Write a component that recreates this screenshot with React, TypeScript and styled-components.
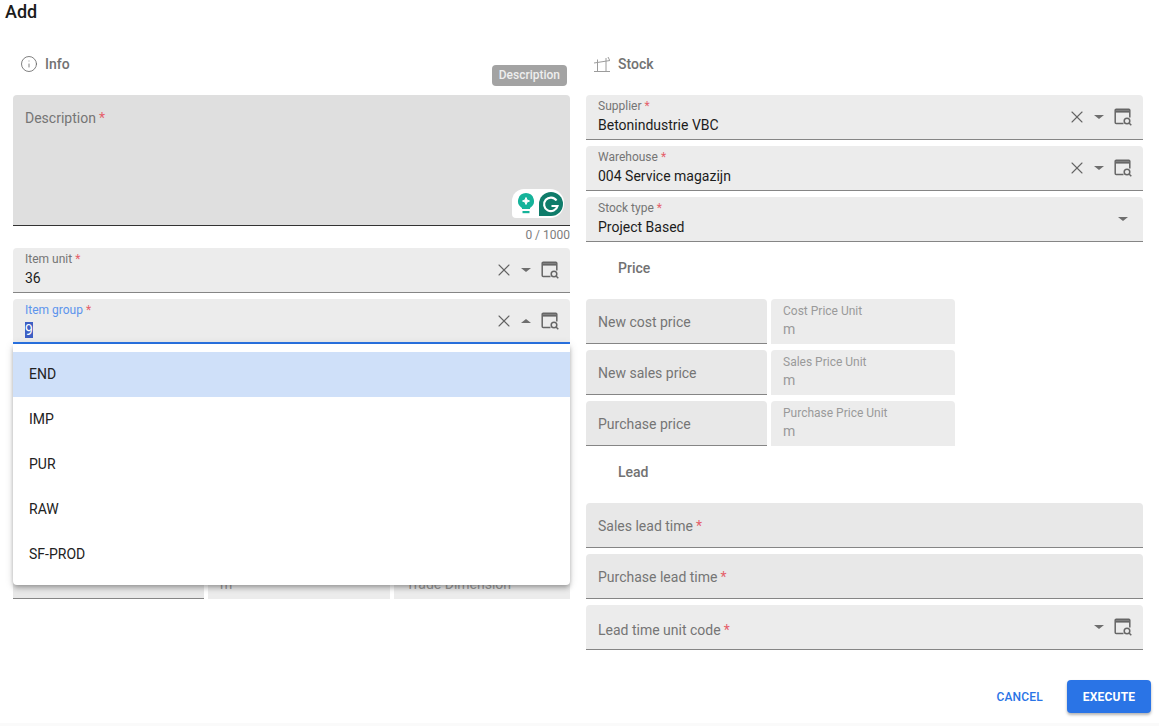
import { FC, ReactNode } from 'react';
import { Info, X } from 'lucide-react';
import styled, { createGlobalStyle } from 'styled-components';

const Global = createGlobalStyle`
  html, body {
    margin: 0;
    padding: 0;
    background: #fff;
    font-family: Roboto, "Liberation Sans", sans-serif;
  }
`;

const Page = styled.div`
  width: 1159px;
  height: 726px;
  box-sizing: border-box;
  overflow: hidden;
  display: flex;
  flex-direction: column;
  background: #fff;
  border-bottom: 3px solid #fafafa;
`;

const Title = styled.div`
  height: 44px;
  margin-bottom: -44px;
  padding-left: 5px;
  font-size: 18px;
  font-weight: 500;
  line-height: 24px;
  color: #1b1b1b;
`;

const Columns = styled.div`
  display: grid;
  grid-template-columns: 557px 557px;
  column-gap: 16px;
  padding: 44px 0 0 13px;
  height: 636px;
  box-sizing: border-box;
`;

const Column = styled.div`
  display: flex;
  flex-direction: column;
  gap: 6px;
  position: relative;
  min-width: 0;
`;

const Heading = styled.div<{ $inset?: number }>`
  display: flex;
  align-items: center;
  height: 45px;
  padding: 0 0 6px ${p => p.$inset ?? 7}px;
  box-sizing: border-box;
  font-size: 14px;
  font-weight: 500;
  color: #727272;
`;

const HeadingIcon = styled.span`
  display: flex;
  align-items: center;
  justify-content: center;
  width: 18px;
  margin-right: 7px;
  color: #666;
`;

const Tooltip = styled.div`
  position: absolute;
  top: 21px;
  right: 3px;
  height: 21px;
  padding: 0 7px;
  border-radius: 4px;
  background: #a3a3a3;
  color: #eee;
  font-size: 12px;
  font-weight: 500;
  line-height: 21px;
`;

const TextArea = styled.div`
  position: relative;
  height: 131px;
  padding: 14px 12px 0;
  box-sizing: border-box;
  background: #dfdfdf;
  border-bottom: 1px solid #333;
  border-radius: 4px 4px 0 0;
  font-size: 14px;
  line-height: 18px;
  color: #757575;
`;

const Badge = styled.div`
  position: absolute;
  right: 6px;
  bottom: 7px;
  width: 52px;
  height: 29px;
  display: flex;
  align-items: center;
  justify-content: space-between;
  padding: 0 1px 0 5px;
  box-sizing: border-box;
  background: #fff;
  border-radius: 12px 14px 14px 4px;
`;

const Counter = styled.div`
  height: 16px;
  margin-top: -6px;
  font-size: 12px;
  line-height: 19px;
  text-align: right;
  color: #7d7d7d;
`;

const FieldBox = styled.div<{ $dark?: boolean; $focused?: boolean; $plain?: boolean }>`
  position: relative;
  display: flex;
  align-items: center;
  height: 45px;
  padding: 0 11px 0 12px;
  box-sizing: border-box;
  min-width: 0;
  background: ${p => (p.$dark ? '#e8e8e8' : '#ececec')};
  border-radius: 4px 4px 0 0;
  border-bottom: ${p =>
    p.$plain ? 'none' : p.$focused ? '2px solid #2a74e6' : '1px solid #858585'};
`;

const FieldBody = styled.div`
  flex: 1;
  min-width: 0;
  align-self: flex-start;
  height: 44px;
  position: relative;
`;

const Label = styled.div<{ $focused?: boolean; $muted?: boolean }>`
  padding-top: ${p => (p.$muted ? '5px' : '4px')};
  height: 14px;
  font-size: 12px;
  line-height: 14px;
  white-space: nowrap;
  color: ${p => (p.$focused ? '#5c94ec' : p.$muted ? '#9a9a9a' : '#757575')};
`;

const Value = styled.div<{ $muted?: boolean; $focused?: boolean }>`
  height: 18px;
  margin-top: ${p => (p.$muted ? '2px' : p.$focused ? '4px' : '3px')};
  font-size: 14px;
  line-height: 18px;
  white-space: nowrap;
  color: ${p => (p.$muted ? '#9a9a9a' : '#1c1c1c')};
`;

const Placeholder = styled.div<{ $low?: boolean }>`
  padding-top: ${p => (p.$low ? '16px' : '14px')};
  font-size: 14px;
  line-height: 18px;
  white-space: nowrap;
  color: #757575;
`;

const Star = styled.span`
  margin-left: 3px;
  color: #e5606a;
`;

const Selected = styled.span`
  background: #3d5fc4;
  color: #fff;
`;

const Adornments = styled.div`
  display: flex;
  align-items: center;
  gap: 10px;
  color: #646464;
`;

const ClearIcon = styled(X)`
  margin: 0 -3px;
`;

const Caret = styled.span<{ $up?: boolean; $lone?: boolean }>`
  width: 0;
  height: 0;
  margin-right: ${p => (p.$lone ? '4px' : '0')};
  border-left: 5px solid transparent;
  border-right: 5px solid transparent;
  border-top: ${p => (p.$up ? 'none' : '4px solid #6e6e6e')};
  border-bottom: ${p => (p.$up ? '4px solid #6e6e6e' : 'none')};
`;

const Row = styled.div<{ $cols: string }>`
  display: grid;
  grid-template-columns: ${p => p.$cols};
  column-gap: 4px;
`;

const Menu = styled.div`
  position: absolute;
  z-index: 5;
  top: 45px;
  left: 0;
  right: 0;
  padding: 8px 0;
  background: #fff;
  border-radius: 0 0 4px 4px;
  box-shadow: 0 2px 4px -1px rgba(0, 0, 0, 0.2), 0 4px 5px rgba(0, 0, 0, 0.14),
    0 1px 10px rgba(0, 0, 0, 0.12);
`;

const Option = styled.div<{ $active?: boolean }>`
  height: 45px;
  padding: 0 16px 2px;
  box-sizing: border-box;
  display: flex;
  align-items: center;
  font-size: 14px;
  color: #222;
  background: ${p => (p.$active ? '#cfe0f9' : 'transparent')};
`;

const Footer = styled.div`
  display: flex;
  justify-content: flex-end;
  align-items: center;
  gap: 8px;
  height: 33px;
  margin-top: 44px;
  padding-right: 8px;
`;

const CancelButton = styled.button`
  height: 33px;
  padding: 0 16px;
  border: none;
  background: transparent;
  color: #2a74e6;
  font: 500 12px Roboto, sans-serif;
  letter-spacing: 0.2px;
`;

const ExecuteButton = styled.button`
  width: 84px;
  height: 33px;
  border: none;
  border-radius: 4px;
  background: #2a74e6;
  color: #fff;
  font: 700 12px Roboto, sans-serif;
  letter-spacing: 0.2px;
  box-shadow: 0 2px 3px rgba(0, 0, 0, 0.3);
`;

const LookupIcon = () => (
  <svg width="18" height="18" viewBox="0 0 18 18" fill="none" stroke="#666">
    <path d="M9.5 15.5H2.2a1 1 0 0 1-1-1V2.2a1 1 0 0 1 1-1h12.6a1 1 0 0 1 1 1v7.3" strokeWidth="1.5" />
    <path d="M1.5 3.4h14" strokeWidth="2.4" />
    <circle cx="13" cy="13" r="2.8" strokeWidth="1.5" />
    <path d="M15 15l2.3 2.3" strokeWidth="1.5" />
  </svg>
);

const StockIcon = () => (
  <svg width="18" height="18" viewBox="0 0 18 18" fill="none" stroke="#9c9c9c" strokeWidth="1">
    <path d="M1 8l16-2.5M4.5 4.5v12M13 3v13.5M1 16.5h16M15 2l1.5 3" />
  </svg>
);

const Grammarly = () => (
  <Badge>
    <svg width="18" height="22" viewBox="0 0 18 22">
      <path d="M9 0a8 8 0 0 1 4 14.9V16H5v-1.1A8 8 0 0 1 9 0z" fill="#15b39a" />
      <path d="M5.5 18h7v2.2h-7z" fill="#15b39a" />
      <path d="M9 4.5l1 2.5 2.5 1-2.5 1-1 2.5-1-2.5-2.5-1 2.5-1z" fill="#fff" stroke="#fff" />
    </svg>
    <svg width="24" height="24" viewBox="0 0 24 24">
      <path d="M12 0a12 12 0 0 1 0 24H0V12A12 12 0 0 1 12 0z" fill="#0f7c6a" />
      <path d="M17.5 8.5a6.8 6.8 0 1 0 1 5.5h-6" fill="none" stroke="#fff" strokeWidth="2.2" />
    </svg>
  </Badge>
);

const Required = () => <Star>*</Star>;

const Field: FC<{
  label?: string;
  value?: ReactNode;
  required?: boolean;
  focused?: boolean;
  dark?: boolean;
  low?: boolean;
  clear?: boolean;
  lookup?: boolean;
  caret?: boolean;
  children?: ReactNode;
}> = ({ label, value, required, focused, dark, low, clear, lookup, caret, children }) => (
  <FieldBox $dark={dark} $focused={focused}>
    <FieldBody>
      {value !== undefined ? (
        <>
          <Label $focused={focused}>
            {label}
            {required && <Required />}
          </Label>
          <Value $focused={focused}>{value}</Value>
        </>
      ) : (
        <Placeholder $low={low}>
          {label}
          {required && <Required />}
        </Placeholder>
      )}
    </FieldBody>
    <Adornments>
      {clear && <ClearIcon size={20} strokeWidth={1.3} />}
      {caret && <Caret $up={focused} $lone={!lookup && !clear} />}
      {lookup && <LookupIcon />}
    </Adornments>
    {children}
  </FieldBox>
);

const UnitField: FC<{ label?: string; value: string }> = ({ label, value }) => (
  <FieldBox $plain>
    <FieldBody>
      <Label $muted>{label}</Label>
      <Value $muted>{value}</Value>
    </FieldBody>
  </FieldBox>
);

const PriceRow: FC<{ label: string; unit: string }> = ({ label, unit }) => (
  <Row $cols="181px 184px">
    <Field label={label} dark />
    <UnitField label={unit} value="m" />
  </Row>
);

const groups = ['END', 'IMP', 'PUR', 'RAW', 'SF-PROD'];

export default function App() {
  return (
    <Page>
      <Global />
      <Title>Add</Title>
      <Columns>
        <Column>
          <Heading>
            <HeadingIcon>
              <Info size={18} strokeWidth={1.1} />
            </HeadingIcon>
            Info
          </Heading>
          <Tooltip>Description</Tooltip>
          <TextArea>
            Description
            <Required />
            <Grammarly />
          </TextArea>
          <Counter>0 / 1000</Counter>
          <Field label="Item unit" value="36" required clear caret lookup />
          <Field
            label="Item group"
            value={<Selected>9</Selected>}
            required
            focused
            clear
            caret
            lookup
          >
            <Menu>
              {groups.map((group, i) => (
                <Option key={group} $active={i === 0}>
                  {group}
                </Option>
              ))}
            </Menu>
          </Field>
          <Field dark />
          <Field dark />
          <Field dark />
          <Field dark />
          <Row $cols="191px 182px 176px">
            <Field dark />
            <UnitField value="m" />
            <UnitField value="Trade Dimension" />
          </Row>
        </Column>
        <Column>
          <Heading>
            <HeadingIcon>
              <StockIcon />
            </HeadingIcon>
            Stock
          </Heading>
          <Field label="Supplier" value="Betonindustrie VBC" required clear caret lookup />
          <Field label="Warehouse" value="004 Service magazijn" required clear caret lookup />
          <Field label="Stock type" value="Project Based" required caret />
          <Heading $inset={32}>Price</Heading>
          <PriceRow label="New cost price" unit="Cost Price Unit" />
          <PriceRow label="New sales price" unit="Sales Price Unit" />
          <PriceRow label="Purchase price" unit="Purchase Price Unit" />
          <Heading $inset={32}>Lead</Heading>
          <Field label="Sales lead time" required dark />
          <Field label="Purchase lead time" required dark />
          <Field label="Lead time unit code" required caret lookup low />
        </Column>
      </Columns>
      <Footer>
        <CancelButton>CANCEL</CancelButton>
        <ExecuteButton>EXECUTE</ExecuteButton>
      </Footer>
    </Page>
  );
}
